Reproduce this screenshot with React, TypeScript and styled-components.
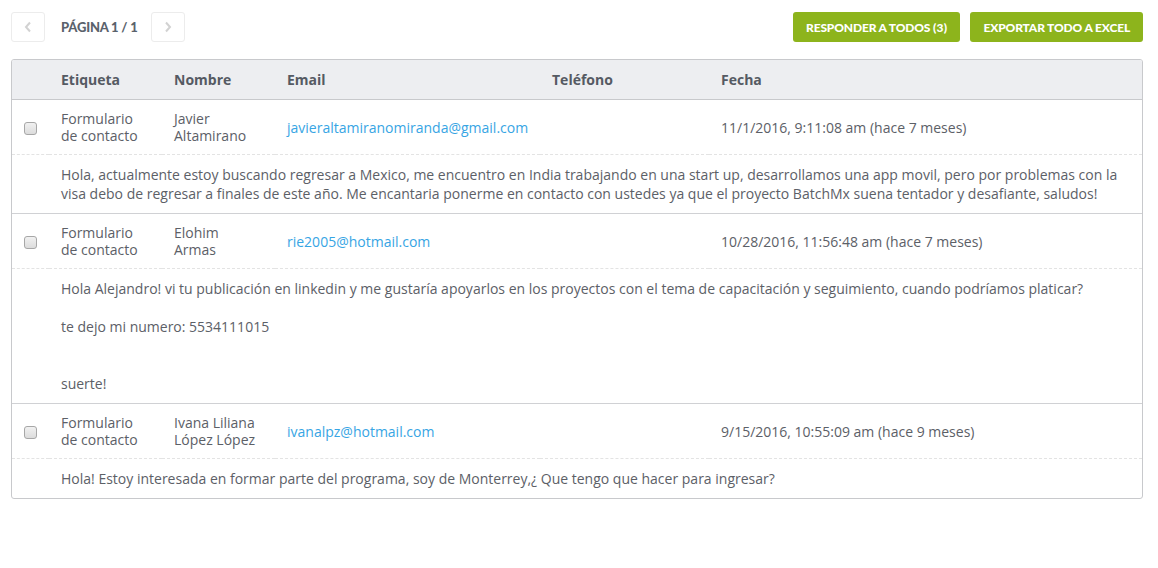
import { Fragment } from 'react'
import styled, { createGlobalStyle } from 'styled-components'

type Entry = {
  tag: string
  name: string
  email: string
  phone: string
  date: string
  message: string[]
}

const entries: Entry[] = [
  {
    tag: 'Formulario de contacto',
    name: 'Javier Altamirano',
    email: 'javieraltamiranomiranda@gmail.com',
    phone: '',
    date: '11/1/2016, 9:11:08 am (hace 7 meses)',
    message: [
      'Hola, actualmente estoy buscando regresar a Mexico, me encuentro en India trabajando en una start up, desarrollamos una app movil, pero por problemas con la visa debo de regresar a finales de este año. Me encantaria ponerme en contacto con ustedes ya que el proyecto BatchMx suena tentador y desafiante, saludos!',
    ],
  },
  {
    tag: 'Formulario de contacto',
    name: 'Elohim Armas',
    email: 'rie2005@hotmail.com',
    phone: '',
    date: '10/28/2016, 11:56:48 am (hace 7 meses)',
    message: [
      'Hola Alejandro! vi tu publicación en linkedin y me gustaría apoyarlos en los proyectos con el tema de capacitación y seguimiento, cuando podríamos platicar?',
      '',
      'te dejo mi numero: 5534111015',
      '',
      '',
      'suerte!',
    ],
  },
  {
    tag: 'Formulario de contacto',
    name: 'Ivana Liliana López López',
    email: 'ivanalpz@hotmail.com',
    phone: '',
    date: '9/15/2016, 10:55:09 am (hace 9 meses)',
    message: ['Hola! Estoy interesada en formar parte del programa, soy de Monterrey,¿ Que tengo que hacer para ingresar?'],
  },
]

function App() {
  return (
    <Page>
      <GlobalStyle />
      <Toolbar>
        <Pager>
          <PagerButton aria-label="anterior">
            <Chevron viewBox="0 0 8 12">
              <path d="M6 1.5 L2 6 L6 10.5" />
            </Chevron>
          </PagerButton>
          <PageLabel>Página 1 / 1</PageLabel>
          <PagerButton aria-label="siguiente">
            <Chevron viewBox="0 0 8 12">
              <path d="M2 1.5 L6 6 L2 10.5" />
            </Chevron>
          </PagerButton>
        </Pager>
        <Actions>
          <ActionButton>
            Responder a todos <Count>(3)</Count>
          </ActionButton>
          <ActionButton>Exportar todo a Excel</ActionButton>
        </Actions>
      </Toolbar>

      <TableBox>
        <Table>
          <colgroup>
            <col style={{ width: 37 }} />
            <col style={{ width: 113 }} />
            <col style={{ width: 113 }} />
            <col style={{ width: 265 }} />
            <col style={{ width: 169 }} />
            <col />
          </colgroup>
          <thead>
            <tr>
              <HeadCell />
              <HeadCell>Etiqueta</HeadCell>
              <HeadCell>Nombre</HeadCell>
              <HeadCell>Email</HeadCell>
              <HeadCell>Teléfono</HeadCell>
              <HeadCell>Fecha</HeadCell>
            </tr>
          </thead>
          <tbody>
            {entries.map((e, i) => {
              const last = i === entries.length - 1
              return (
                <Fragment key={i}>
                  <tr>
                    <Cell $check>
                      <Checkbox />
                    </Cell>
                    <Cell>{e.tag.replace('Formulario ', 'Formulario\n')}</Cell>
                    <Cell>{e.name}</Cell>
                    <Cell>
                      <Mail href={`mailto:${e.email}`}>{e.email}</Mail>
                    </Cell>
                    <Cell>{e.phone}</Cell>
                    <Cell>{e.date}</Cell>
                  </tr>
                  <tr>
                    <MessageCell $last={last} />
                    <MessageCell colSpan={5} $last={last}>
                      {e.message.map((line, j) => (
                        <MessageLine key={j}>{line || '\u00a0'}</MessageLine>
                      ))}
                    </MessageCell>
                  </tr>
                </Fragment>
              )
            })}
          </tbody>
        </Table>
      </TableBox>
    </Page>
  )
}

export default App

const GlobalStyle = createGlobalStyle`
  body {
    margin: 0;
    background: #fff;
    font-family: "Open Sans", "Liberation Sans", sans-serif;
    color: #5c6067;
  }
`

const Page = styled.div`
  padding: 12px 15px 0 11px;
`

const Toolbar = styled.div`
  display: flex;
  justify-content: space-between;
  align-items: center;
  height: 30px;
  margin-bottom: 17px;
`

const Pager = styled.div`
  display: flex;
  align-items: center;
`

const PagerButton = styled.button`
  width: 34px;
  height: 30px;
  padding: 0;
  display: flex;
  align-items: center;
  justify-content: center;
  background: #fff;
  border: 1px solid #ececec;
  border-radius: 3px;
`

const Chevron = styled.svg`
  width: 8px;
  height: 12px;
  fill: none;
  stroke: #d2d2d2;
  stroke-width: 2;
`

const PageLabel = styled.span`
  margin: 0 13px 0 16px;
  font-family: Lato, "Liberation Sans", sans-serif;
  font-weight: 900;
  font-size: 13px;
  letter-spacing: -0.2px;
  text-transform: uppercase;
  color: #5a626c;
`

const Actions = styled.div`
  display: flex;
  gap: 10px;
`

const ActionButton = styled.button`
  height: 30px;
  padding: 0 13px;
  background: #8db41c;
  border: none;
  border-radius: 3px;
  color: #fff;
  font-family: Lato, "Liberation Sans", sans-serif;
  font-weight: 900;
  font-size: 12px;
  letter-spacing: -0.15px;
  text-transform: uppercase;
`

const Count = styled.span`
  font-size: 12px;
  letter-spacing: 0.3px;
`

const TableBox = styled.div`
  border: 1px solid #c8c9cc;
  border-radius: 3px;
  overflow: hidden;
`

const Table = styled.table`
  width: 100%;
  border-collapse: separate;
  border-spacing: 0;
  table-layout: fixed;
  font-size: 14px;
`

const HeadCell = styled.th`
  height: 39px;
  padding: 0 12px;
  background: #edeef1;
  border-bottom: 1px solid #c8c9cc;
  text-align: left;
  font-weight: 700;
  color: #555a63;
`

const Cell = styled.td<{ $check?: boolean }>`
  height: 34px;
  padding: 10px ${(p) => (p.$check ? '0' : '12px')};
  text-align: ${(p) => (p.$check ? 'center' : 'left')};
  vertical-align: middle;
  line-height: 17px;
  white-space: pre-line;
  border-bottom: 1px dashed #e3e3e3;
`

const Checkbox = styled.span`
  display: inline-block;
  width: 11px;
  height: 11px;
  border: 1px solid #a7a7a7;
  border-radius: 3px;
  background: linear-gradient(#f1f1f1, #dcdcdc);
  vertical-align: middle;
`

const Mail = styled.a`
  color: #37a5e4;
  text-decoration: none;
`

const MessageCell = styled.td<{ $last?: boolean }>`
  padding: 10px 12px;
  line-height: 19px;
  border-bottom: ${(p) => (p.$last ? 'none' : '1px solid #d0d1d4')};
`

const MessageLine = styled.div``
